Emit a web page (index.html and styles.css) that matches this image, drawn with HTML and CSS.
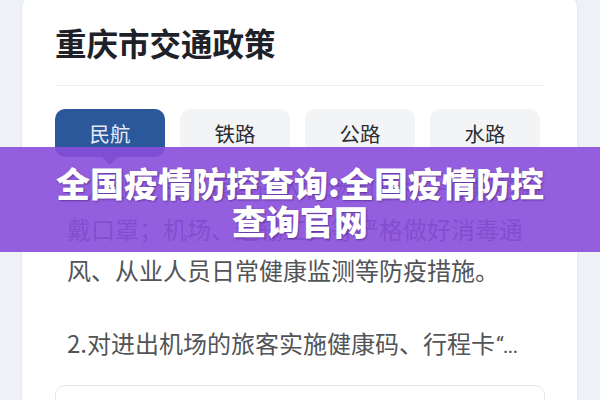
FILE: index.html
```html
<!DOCTYPE html>
<html lang="zh-CN">
<head>
<meta charset="utf-8">
<title>重庆市交通政策</title>
<link rel="stylesheet" href="styles.css">
</head>
<body>
  <main class="card">
    <h1 class="card-title">重庆市交通政策</h1>
    <hr class="divider">
    <nav class="tabs">
      <span class="tab tab-active">民航</span>
      <span class="tab">铁路</span>
      <span class="tab">公路</span>
      <span class="tab">水路</span>
    </nav>
    <p class="policy">1.从业人员、乘客进入机场和乘机一律规范佩<br>戴口罩；机场、运输工具等严格做好消毒通<br>风、从业人员日常健康监测等防疫措施。</p>
    <p class="policy policy-next">2.对进出机场的旅客实施健康码、行程卡<span class="ellipsis">“...</span></p>
    <div class="panel"></div>
  </main>

  <div class="banner">
    <p class="banner-text">全国疫情防控查询:全国疫情防控<br>查询官网</p>
  </div>
</body>
</html>
```

FILE: styles.css
```css
* {
  box-sizing: border-box;
}

html,
body {
  margin: 0;
  height: 100%;
  overflow: hidden;
}

body {
  background: #eef1f5;
  padding: 0 23px 0 22px;
  font-family: "Noto Sans CJK SC", "Noto Sans", sans-serif;
}

.card {
  margin-top: -6px;
  height: 420px;
  background: #ffffff;
  border-radius: 14px;
  box-shadow: 0 0 3px rgba(40, 60, 90, 0.08);
  padding: 26px 32px 0 33px;
}

.card-title {
  margin: 0;
  font-size: 31.5px;
  line-height: 44px;
  font-weight: 700;
  color: #1e2228;
}

.divider {
  margin: 21px 0 0;
  border: 0;
  height: 1px;
  background: #ececee;
}

.tabs {
  margin-top: 23px;
  display: flex;
  gap: 15px;
}

.tab {
  position: relative;
  width: 110px;
  height: 48px;
  border-radius: 10px;
  background: #f3f4f6;
  color: #2a2d31;
  font-size: 20.5px;
  display: flex;
  align-items: center;
  justify-content: center;
}

.tab-active {
  background: #2b579b;
  color: #e4ebf6;
}

/* little pointer under the selected tab */
.tab-active::after {
  content: "";
  position: absolute;
  left: 50%;
  top: 100%;
  margin-left: -8px;
  border-left: 8px solid transparent;
  border-right: 8px solid transparent;
  border-top: 8px solid #2b579b;
}

.policy {
  margin: 10px 0 0;
  padding-left: 12px;
  font-size: 24px;
  line-height: 41px;
  color: #525457;
  white-space: nowrap;
}

.policy-next {
  margin-top: 32px;
}

/* truncated tail: narrow latin quote and dots */
.ellipsis {
  font-family: "Roboto", "Liberation Sans", sans-serif;
  font-size: 22px;
  letter-spacing: -1px;
  margin-left: 1px;
}

.panel {
  margin-top: 19px;
  height: 80px;
  border: 1px solid #e6e7e9;
  border-radius: 10px;
  background: #ffffff;
}

.banner {
  position: absolute;
  left: 0;
  right: 0;
  top: 147px;
  height: 105px;
  background: rgba(136, 78, 220, 0.9);
  display: flex;
  align-items: center;
  justify-content: center;
}

.banner-text {
  margin: 4px 0 0;
  text-align: center;
  color: #ffffff;
  font-size: 34px;
  line-height: 38px;
  font-weight: 900;
  text-shadow: 1px 1px 2px rgba(40, 10, 80, 0.45);
}
```
